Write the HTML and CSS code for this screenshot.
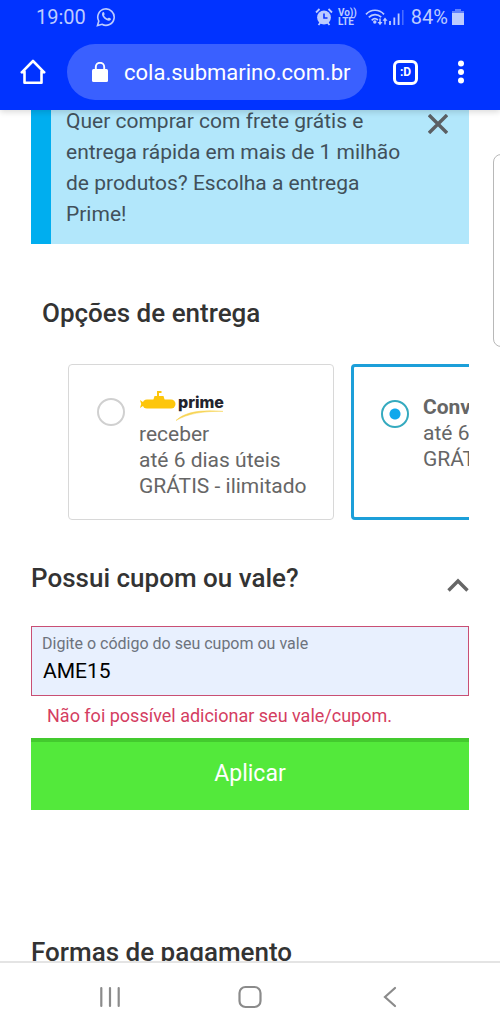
FILE: index.html
```html
<!DOCTYPE html>
<html lang="pt-BR">
<head>
<meta charset="utf-8">
<meta name="viewport" content="width=device-width, initial-scale=1">
<title>Submarino - Entrega</title>
<link rel="stylesheet" href="styles.css">
</head>
<body>
<header class="browser">
  <div class="status">
    <span class="clock">19:00</span>
    <svg class="whatsapp" width="20" height="20" viewBox="0 0 20 20" fill="none" stroke="currentColor" stroke-width="1.6"><path d="M1.5 18.5l1.3-4.4A8.2 8.2 0 1 1 6 17.3z"/><path d="M6.5 5.5c.8-.8 1.5-.4 1.8.5.5 1.4.4 1.5-.3 2.3.8 1.7 1.8 2.6 3.6 3.3.8-1 1.1-1.100 2.200-.5 1.400.7 1.500 1 .8 2-2.500 2.500-9-2.500-8.600-6 .1-.7.2-1.200.5-1.600z" fill="currentColor" stroke="none"/></svg>
    <div class="signals">
      <svg width="18" height="18" viewBox="0 0 18 18"><circle cx="9" cy="9.500" r="6.900" fill="currentColor"/><path d="M1 4.500L4.500 1M17 4.500L13.500 1M3.500 17l2-2.500M14.500 17l-2-2.500" stroke="currentColor" stroke-width="1.800"/><path d="M9 5.500V10h3.500" fill="none" stroke="#0b34ff" stroke-width="1.600"/></svg>
      <span class="volte"><span>Vo))</span><span>LTE</span></span>
      <svg class="wifi" width="23" height="18" viewBox="0 0 23 18" fill="none" stroke="currentColor" stroke-width="1.700"><path d="M1 6.300C6 .9 14 .9 19 6.300M3.800 9.400c3.600-3.700 8.800-3.700 12.400-.2M6.700 12.300c1.800-1.800 4.400-1.800 6.200-.3"/><circle cx="9.800" cy="14" r="1.700" fill="currentColor" stroke="none"/><path d="M15 10.500v5M20 16.500v-5" stroke-width="1.500"/><path d="M12.500 14h5L15 17.300zM17.500 12.800h5L20 9.500z" fill="currentColor" stroke="none"/></svg>
      <svg width="15" height="18" viewBox="0 0 15 18"><path d="M1 17v-4M5.300 17V9.500M9.600 17V5.500" stroke="currentColor" stroke-width="1.800"/><path d="M13.800 17V2" stroke="currentColor" stroke-width="1.500" opacity=".4"/></svg>
      <span class="percent">84%</span>
      <svg width="12" height="18" viewBox="0 0 12 18"><path d="M3 3V1h6v2h3v3H0V3z" fill="currentColor" opacity=".5"/><path d="M0 5h12v12H0z" fill="currentColor"/></svg>
    </div>
  </div>
  <div class="toolbar">
    <button class="tool" type="button" aria-label="Início"><svg width="26" height="26" viewBox="0 0 26 26" fill="none" stroke="currentColor" stroke-width="2.600" stroke-linejoin="round" stroke-linecap="round"><path d="M4.500 12.500v11.200h17V12.500M1.800 13.300L13 2l11.200 11.300M1.800 13.300h2.700M24.200 13.300h-2.700"/></svg></button>
    <div class="address">
      <svg width="16" height="20" viewBox="0 0 16 20"><rect y="7" width="16" height="13" rx="1.500" fill="currentColor"/><path d="M3.800 8V5a4.200 4.200 0 0 1 8.400 0v3" fill="none" stroke="currentColor" stroke-width="1.900"/></svg>
      <span>cola.submarino.com.br</span>
    </div>
    <button class="tool tabs" type="button" aria-label="Abas">:D</button>
    <button class="tool more" type="button" aria-label="Mais opções"><svg width="8" height="24" viewBox="0 0 8 24" fill="currentColor"><circle cx="4" cy="3.500" r="3"/><circle cx="4" cy="12" r="3"/><circle cx="4" cy="20.500" r="3"/></svg></button>
  </div>
</header>

<main class="page">
  <section class="alert">
    <p>Quer comprar com frete grátis e entrega rápida em mais de 1 milhão de produtos? Escolha a entrega Prime!</p>
    <button class="close" type="button" aria-label="Fechar"><svg width="20" height="20" viewBox="0 0 20 20" stroke="currentColor" stroke-width="3.400"><path d="M1 1l18 18M19 1L1 19"/></svg></button>
  </section>

  <h2 class="title delivery-title">Opções de entrega</h2>
  <div class="options">
    <label class="option">
      <input type="radio" name="delivery">
      <span class="details">
        <span class="logo">
          <svg class="sub" width="38" height="20" viewBox="0 0 36 20" fill="#fdc60b"><rect x="2.500" y="9.500" width="33" height="9" rx="4.500"/><path d="M13 11l1.500-5H17V1h4.500v2H19v3h4.500l1.500 5z"/><path d="M0 10l4 2.800v2.400L0 18l1.200-4z"/></svg>
          <b>prime</b>
          <svg class="swoosh" width="48" height="11" viewBox="0 0 48 11"><path d="M0 10.500C9 2 24-.5 47 1.400 27 1 12 3.500 0 10.500z" fill="#f7d455" stroke="#f7d455" stroke-width=".5"/></svg>
        </span>
        <span>receber</span><span>até 6 dias úteis</span><span>GRÁTIS - ilimitado</span>
      </span>
    </label>
    <label class="option chosen">
      <input type="radio" name="delivery" checked>
      <span class="details"><strong>Conv</strong><span>até 6</span><span>GRÁTIS</span></span>
    </label>
  </div>

  <div class="coupon-head">
    <h2 class="title">Possui cupom ou vale?</h2>
    <button class="collapse" type="button" aria-label="Recolher"><svg width="22" height="14" viewBox="0 0 22 14" fill="none" stroke="currentColor" stroke-width="3.400"><path d="M1.500 12.500L11 3l9.500 9.500"/></svg></button>
  </div>
  <form class="coupon">
    <div class="field">
      <label for="code">Digite o código do seu cupom ou vale</label>
      <input id="code" type="text" value="AME15" aria-describedby="code-error">
    </div>
    <p class="error" id="code-error">Não foi possível adicionar seu vale/cupom.</p>
    <button class="apply" type="button">Aplicar</button>
  </form>
  <h2 class="title payment-title">Formas de pagamento</h2>
  <div class="edge"></div>
</main>

<nav class="system">
  <button type="button" aria-label="Recentes"><svg width="22" height="22" viewBox="0 0 22 22" stroke="currentColor" stroke-width="2.200" stroke-linecap="round"><path d="M2.300 2v18M11 2v18M19.700 2v18"/></svg></button>
  <button type="button" aria-label="Tela inicial"><svg width="24" height="24" viewBox="0 0 24 24" fill="none" stroke="currentColor" stroke-width="2.200"><rect x="1.500" y="2" width="21" height="20" rx="6"/></svg></button>
  <button type="button" aria-label="Voltar"><svg width="22" height="22" viewBox="0 0 22 22" fill="none" stroke="currentColor" stroke-width="2.200" stroke-linecap="round"><path d="M16 2L6 11l10 9"/></svg></button>
</nav>
</body>
</html>
```
FILE: styles.css
```css
* { box-sizing: border-box; }

body {
  margin: 0;
  height: 100vh;
  display: flex;
  flex-direction: column;
  overflow: hidden;
  background: #fff;
  color: #333;
  font-family: Roboto, "Liberation Sans", sans-serif;
  font-size: 21px;
}

h2, p { margin: 0; }

button {
  margin: 0;
  padding: 0;
  border: 0;
  background: none;
  color: inherit;
  font: inherit;
}

svg { display: block; flex: none; }

.browser {
  flex: none;
  padding-bottom: 10px;
  background: #0133ff;
  color: #fff;
  box-shadow: 0 2px 6px rgba(0, 0, 0, .15);
  z-index: 1;
}

.status {
  display: flex;
  align-items: center;
  height: 34px;
  margin-bottom: 10px;
  padding: 0 36px;
  color: #bccbff;
  font-size: 20px;
}

.whatsapp { margin-left: 10px; }

.signals {
  display: flex;
  align-items: center;
  margin-left: auto;
}

.volte {
  display: flex;
  flex-direction: column;
  margin: 0 8px 0 5px;
  font-size: 10px;
  font-weight: 700;
  line-height: 9px;
}

.wifi { margin-right: 1px; }
.percent { margin: 0 4px 0 7px; }

.toolbar {
  display: flex;
  align-items: center;
  height: 56px;
  padding: 0 35px 0 20px;
}

.address {
  flex: 1;
  display: flex;
  align-items: center;
  gap: 16px;
  height: 56px;
  margin: 0 26px 0 21px;
  padding-left: 25px;
  border-radius: 28px;
  background: #3a60ff;
  font-size: 22px;
  white-space: nowrap;
}

.tabs {
  width: 25px;
  height: 25px;
  border: 3px solid #fff;
  border-radius: 6px;
  font-size: 12px;
  font-weight: 700;
  line-height: 18px;
}

.more { margin-left: 39px; }

.page {
  flex: 1;
  min-height: 0;
  overflow: hidden;
  padding: 0 31px;
  position: relative;
}

.alert {
  display: flex;
  align-items: flex-start;
  justify-content: space-between;
  margin-top: -24px;
  padding: 20px 21px 14px 15px;
  border-left: 20px solid #00aeef;
  background: #b2e7fb;
  color: #41505a;
  line-height: 31px;
}

.alert p { max-width: 345px; }

.close { margin-top: 8px; color: #5b5f63; }

.title {
  font-size: 26px;
  font-weight: 500;
  line-height: 30px;
}

.delivery-title { margin: 54px 0 36px 11px; }

.options {
  display: flex;
  gap: 17px;
  overflow: hidden;
  padding-left: 37px;
}

.option {
  flex: none;
  display: flex;
  width: 266px;
  height: 156px;
  padding: 25px 0 0 28px;
  border: 1px solid #d8d8d8;
  border-radius: 4px;
  color: #666;
}

.option.chosen {
  padding: 27px 0 0 27px;
  border: 3px solid #1c9fd9;
}

.option input {
  appearance: none;
  flex: none;
  width: 28px;
  height: 28px;
  margin: 8px 14px 0 0;
  border: 2px solid #d0d0d0;
  border-radius: 50%;
}

.option.chosen input {
  margin-top: 6px;
  border-color: #35aabf;
  background: radial-gradient(circle, #0fa8ec 5px, #fff 6px);
}

.details {
  display: flex;
  flex-direction: column;
  line-height: 26px;
  white-space: nowrap;
}

.logo {
  display: grid;
  grid-template-columns: 37px 50px;
  grid-template-rows: 20px 11px;
}

.logo b {
  align-self: end;
  padding-left: 2px;
  color: #22232d;
  font-family: Inter, Roboto, sans-serif;
  font-size: 16px;
  font-weight: 800;
  line-height: 16px;
}

.swoosh { grid-column: 2; }

.coupon-head {
  display: flex;
  align-items: center;
  justify-content: space-between;
  margin: 43px 0 33px;
}

.collapse { padding-top: 13px; color: #666; }

.field {
  display: flex;
  flex-direction: column;
  height: 70px;
  padding: 7px 10px;
  border: 1px solid #c94f74;
  background: #e8f0fe;
}

.field label {
  color: #6d737d;
  font-size: 16px;
  line-height: 20px;
}

.field input {
  width: 100%;
  height: 34px;
  padding: 0 1px;
  border: 0;
  outline: 0;
  background: none;
  color: #000;
  font: inherit;
}

.error {
  padding: 8px 16px 10px;
  color: #d43d61;
  font-size: 18px;
  line-height: 24px;
}

.apply {
  display: block;
  width: 100%;
  height: 72px;
  padding-bottom: 5px;
  border-top: 4px solid #43ca2e;
  background: #53e93b;
  color: #fff;
  font-size: 23px;
}

.payment-title { margin-top: 127px; }

/* Edge panel handle, drawn over the page */
.edge {
  position: absolute;
  top: 44px;
  right: -9px;
  width: 16px;
  height: 193px;
  border: 1px solid #b8b8b8;
  border-radius: 8px;
  background: #fff;
}

.system {
  flex: none;
  display: flex;
  align-items: center;
  justify-content: space-between;
  height: 67px;
  padding: 2px 99px 0;
  border-top: 2px solid #e4e4e4;
  background: #fff;
  color: #8b8b8b;
}
```
